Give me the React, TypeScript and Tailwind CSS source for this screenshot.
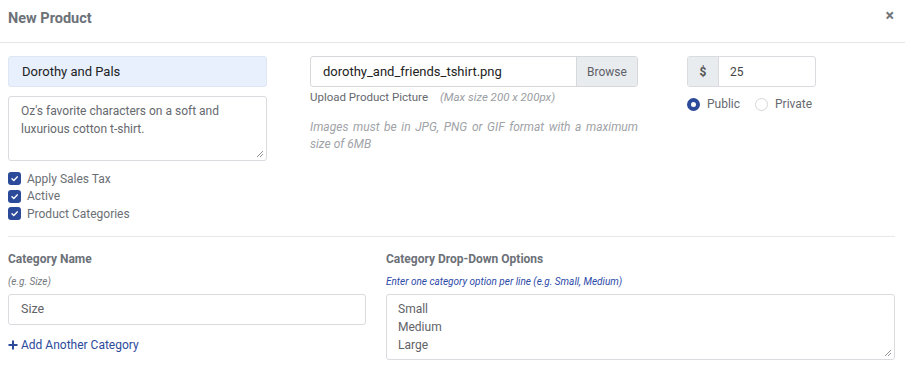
import React from 'react';

const Check: React.FC<{ label: string }> = ({ label }) => (
  <label className="flex items-center gap-[6px] h-[17.5px]">
    <span className="w-[13px] h-[13px] rounded-[3px] bg-[#2c4a9a] flex items-center justify-center">
      <svg width="9" height="9" viewBox="0 0 10 10">
        <path d="M2.2 5.2l2 2 3.8-4" fill="none" stroke="#fff" strokeWidth="1.6" strokeLinecap="round" strokeLinejoin="round" />
      </svg>
    </span>
    <span className="text-[12px] text-[#6b6f75]">{label}</span>
  </label>
);

const NewProduct: React.FC = () => {
  return (
    <div className="w-[905px] h-[377px] bg-white overflow-hidden" style={{ fontFamily: 'Roboto, "Liberation Sans", sans-serif' }}>
      {/* Header */}
      <div className="h-[43px] border-b border-[#e3e5e8] flex items-center justify-between pl-[8px] pr-[11px]">
        <h1 className="text-[14.5px] font-bold text-[#6c7178] mt-[-5px]">New Product</h1>
        <span className="text-[16px] font-bold text-[#707478] mt-[-10px] leading-none">×</span>
      </div>

      <div className="px-[8px] pt-[13px]">
        <div className="flex">
          {/* Name, description, options */}
          <div className="w-[259px]">
            <div className="h-[31px] rounded-[3px] bg-[#e8f0fe] border border-[#dfe6f3] flex items-center px-[13px] text-[13px] text-[#222]">
              Dorothy and Pals
            </div>
            <div className="relative mt-[9px] h-[65px] rounded-[3px] border border-[#d9dbde] px-[12px] pt-[6px] text-[12px] leading-[17.5px] text-[#66696e]">
              Oz's favorite characters on a soft and luxurious cotton t-shirt.
              <svg className="absolute right-[2px] bottom-[2px]" width="8" height="8" viewBox="0 0 8 8">
                <path d="M7 1L1 7M7 4L4 7" stroke="#888" strokeWidth="0.9" />
              </svg>
            </div>
            <div className="mt-[9px] flex flex-col">
              <Check label="Apply Sales Tax" />
              <Check label="Active" />
              <Check label="Product Categories" />
            </div>
          </div>

          {/* Upload */}
          <div className="w-[328px] ml-[43px]">
            <div className="h-[31px] flex rounded-[3px] border border-[#d6d8db] overflow-hidden">
              <div className="flex-1 flex items-center px-[12px] text-[13px] text-[#222]">dorothy_and_friends_tshirt.png</div>
              <div className="w-[61px] bg-[#e9ecef] border-l border-[#d6d8db] flex items-center justify-center text-[12px] text-[#5e6167]">Browse</div>
            </div>
            <div className="mt-[2px] text-[11.5px] text-[#66696e] leading-[17px]">
              Upload Product Picture
              <span className="italic text-[#9a9da2] ml-[12px]">(Max size 200 x 200px)</span>
            </div>
            <p className="mt-[13px] italic text-[12px] text-[#a0a3a7] leading-[17px] text-justify">
              Images must be in JPG, PNG or GIF format with a maximum size of 6MB
            </p>
          </div>

          {/* Price */}
          <div className="w-[129px] ml-[49px]">
            <div className="h-[31px] flex rounded-[3px] border border-[#d9dbde] overflow-hidden">
              <div className="w-[31px] bg-[#e9ecef] border-r border-[#d9dbde] flex items-center justify-center text-[12px] font-bold text-[#555]">$</div>
              <div className="flex-1 flex items-center px-[11px] text-[12px] text-[#444]">25</div>
            </div>
            <div className="mt-[8px] flex items-center text-[12px] text-[#66696e]">
              <span className="w-[13px] h-[13px] rounded-full border-[4px] border-[#2c4a9a] bg-white" />
              <span className="ml-[7px]">Public</span>
              <span className="ml-[15px] w-[13px] h-[13px] rounded-full border border-[#d3d5d8] bg-white" />
              <span className="ml-[7px]">Private</span>
            </div>
          </div>
        </div>

        <div className="mt-[13px] mr-[2px] border-t border-[#e6e8eb]" />

        {/* Categories */}
        <div className="flex mt-[14px]">
          <div className="w-[358px]">
            <h2 className="text-[12px] font-bold text-[#6c7178] leading-[16px]">Category Name</h2>
            <p className="mt-[8px] italic text-[10px] text-[#74777c] leading-[14px]">(e.g. Size)</p>
            <div className="mt-[5px] h-[31px] rounded-[3px] border border-[#d9dbde] flex items-center px-[12px] text-[12.5px] text-[#5f6267]">
              Size
            </div>
            <div className="mt-[11px] flex items-center gap-[3px] text-[12px] text-[#2c4a9a]">
              <svg width="10" height="10" viewBox="0 0 10 10">
                <path d="M5 0.5v9M0.5 5h9" stroke="#2c4a9a" strokeWidth="2" />
              </svg>
              Add Another Category
            </div>
          </div>
          <div className="ml-[20px] w-[509px]">
            <h2 className="text-[12px] font-bold text-[#6c7178] leading-[16px]">Category Drop-Down Options</h2>
            <p className="mt-[8px] italic text-[10px] text-[#2c4aa8] leading-[14px]">Enter one category option per line (e.g. Small, Medium)</p>
            <div className="relative mt-[5px] h-[66px] rounded-[3px] border border-[#d9dbde] px-[11px] pt-[5px] text-[12px] leading-[18px] text-[#5f6267]">
              <div>Small</div>
              <div>Medium</div>
              <div>Large</div>
              <svg className="absolute right-[2px] bottom-[2px]" width="8" height="8" viewBox="0 0 8 8">
                <path d="M7 1L1 7M7 4L4 7" stroke="#888" strokeWidth="0.9" />
              </svg>
            </div>
          </div>
        </div>
      </div>
    </div>
  );
};

export default NewProduct;
